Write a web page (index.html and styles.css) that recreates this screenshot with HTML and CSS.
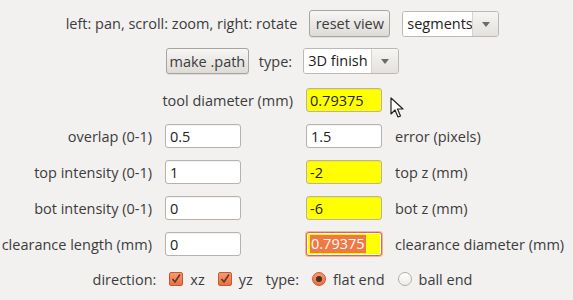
FILE: index.html
```html
<!DOCTYPE html>
<html>
<head>
<meta charset="utf-8">
<title>mill raster 3D</title>
<link rel="stylesheet" href="styles.css">
</head>
<body>
<div class="panel">
	<div class="row row-top">
		<span class="txt">left: pan, scroll: zoom, right: rotate</span>
		<button class="btn btn-reset">reset view</button>
		<div class="combo combo-seg"><span class="combo-val">segments</span><span class="combo-arrow"></span></div>
	</div>
	<div class="row row-make">
		<button class="btn btn-make">make .path</button>
		<span class="txt">type:</span>
		<div class="combo combo-type"><span class="combo-val">3D finish</span><span class="combo-arrow"></span></div>
	</div>
	<div class="grid">
		<label class="lbl lbl-tool">tool diameter (mm)</label>
		<input class="fld fld-yellow c4" type="text" value="0.79375">

		<label class="lbl c1">overlap (0-1)</label>
		<input class="fld c2" type="text" value="0.5">
		<input class="fld c4" type="text" value="1.5">
		<label class="lbl-r c5">error (pixels)</label>

		<label class="lbl c1">top intensity (0-1)</label>
		<input class="fld c2" type="text" value="1">
		<input class="fld fld-yellow c4" type="text" value="-2">
		<label class="lbl-r c5">top z (mm)</label>

		<label class="lbl c1">bot intensity (0-1)</label>
		<input class="fld c2" type="text" value="0">
		<input class="fld fld-yellow c4" type="text" value="-6">
		<label class="lbl-r c5">bot z (mm)</label>

		<label class="lbl c1">clearance length (mm)</label>
		<input class="fld c2" type="text" value="0">
		<div class="fld fld-yellow fld-focus c4"><span class="sel">0.79375</span></div>
		<label class="lbl-r c5">clearance diameter (mm)</label>
	</div>
	<div class="row row-dir">
		<span class="txt">direction:</span>
		<span class="opt"><span class="check"><svg width="12" height="12" viewBox="0 0 12 12"><path d="M2.5 6 L5 9 L10 1.5" fill="none" stroke="#5a3a2c" stroke-width="1.6"/></svg></span>xz</span>
		<span class="opt"><span class="check"><svg width="12" height="12" viewBox="0 0 12 12"><path d="M2.5 6 L5 9 L10 1.5" fill="none" stroke="#5a3a2c" stroke-width="1.6"/></svg></span>yz</span>
		<span class="txt">type:</span>
		<span class="opt"><span class="radio radio-on"></span>flat end</span>
		<span class="opt"><span class="radio"></span>ball end</span>
	</div>
	<svg class="pointer" width="14" height="22" viewBox="0 0 14 22"><path d="M1 1 L1 17 L5 13 L8 20 L10.5 19 L7.5 12 L13 12 Z" fill="#fff" stroke="#222" stroke-width="1.2" stroke-linejoin="round"/></svg>
</div>
</body>
</html>
```
FILE: styles.css
```css
body {
	margin: 0;
	background-color: #f2f1f0;
	font-family: "Open Sans", "DejaVu Sans", sans-serif;
	font-size: 14.5px;
	color: #3c3c3c;
}

.panel {
	position: relative;
	width: 565px;
	padding-top: 10px;
	height: 290px;
}

.row {
	display: flex;
	align-items: center;
	justify-content: center;
	white-space: nowrap;
}

.row-top {
	height: 27px;
	gap: 12px;
}

.row-make {
	margin-top: 11px;
	height: 26px;
	gap: 10px;
}
.row-make .combo {
	margin-left: 1px;
}

.btn {
	font-family: inherit;
	font-size: 14.5px;
	color: #3c3c3c;
	height: 27px;
	padding: 0;
	white-space: nowrap;
	border: 1px solid #a8a49e;
	border-radius: 3px;
	background: linear-gradient(#f7f6f5, #dedbd7);
	box-shadow: 0 1px 0 rgba(0,0,0,0.08);
}
.btn-reset { width: 81px; }
.btn-make { width: 83px; height: 26px; }

.combo {
	display: flex;
	height: 26px;
	border: 1px solid #bdb8b1;
	border-radius: 3px;
	overflow: hidden;
	box-sizing: border-box;
}
.combo-val {
	background: #fff;
	padding: 0 4px;
	line-height: 24px;
	color: #222;
	overflow: hidden;
	white-space: nowrap;
	border-right: 1px solid #d6d2cc;
}
.combo-arrow {
	width: 26px;
	background: linear-gradient(#f6f5f4, #e4e1dd);
	position: relative;
}
.combo-arrow::after {
	content: "";
	position: absolute;
	left: 9px;
	top: 10px;
	border-left: 4px solid transparent;
	border-right: 4px solid transparent;
	border-top: 5px solid #6e6a66;
}
.combo-seg { width: 97px; }
.combo-seg .combo-val { width: 61px; }
.combo-type { width: 96px; }
.combo-type .combo-val { width: 60px; }

.grid {
	display: grid;
	grid-template-columns: 152px 76px 39px 76px auto;
	column-gap: 13px;
	grid-auto-rows: 24px;
	row-gap: 12px;
	margin-top: 14px;
	align-items: center;
}

.lbl {
	text-align: right;
	white-space: nowrap;
}
.lbl-tool {
	grid-column: 1 / 4;
}
.lbl-r {
	white-space: nowrap;
}
.c1 { grid-column: 1; }
.c2 { grid-column: 2; }
.c4 { grid-column: 4; }
.c5 { grid-column: 5; }

.fld {
	box-sizing: border-box;
	width: 76px;
	height: 24px;
	margin: 0;
	padding: 0 4px;
	border: 1px solid #b7b2ab;
	border-radius: 3px;
	background: #fff;
	font-family: inherit;
	font-size: 14.5px;
	color: #222;
	box-shadow: inset 0 1px 1px rgba(0,0,0,0.05);
}
.fld-yellow {
	background: #ffff00;
	padding-left: 3px;
}
.fld-focus {
	display: flex;
	align-items: center;
	border: 1px solid #e0683c;
	box-shadow: 0 0 0 1px #f4b49a, inset 0 0 0 1px #fff;
	padding-left: 3px;
}
.sel {
	background: #f07746;
	color: #fff;
	line-height: 18px;
	padding: 0 1px;
}

.row-dir {
	margin-top: 12px;
	height: 22px;
	gap: 13px;
}
.opt {
	display: flex;
	align-items: center;
	gap: 7px;
}
.check {
	box-sizing: border-box;
	width: 14px;
	height: 14px;
	border: 1px solid #c8582e;
	border-radius: 2px;
	background: linear-gradient(#f59a72, #ec6f40);
	display: flex;
}
.check svg {
	display: block;
}
.radio {
	box-sizing: border-box;
	width: 14px;
	height: 14px;
	border-radius: 50%;
	border: 1px solid #b3aea7;
	background: linear-gradient(#fff, #eeece9);
	position: relative;
}
.radio-on {
	border-color: #c8582e;
	background: linear-gradient(#f59a72, #ec6f40);
}
.radio-on::after {
	content: "";
	position: absolute;
	left: 3px;
	top: 3px;
	width: 6px;
	height: 6px;
	border-radius: 50%;
	background: #4a2e22;
}

.pointer {
	position: absolute;
	left: 390px;
	top: 97px;
}
```
